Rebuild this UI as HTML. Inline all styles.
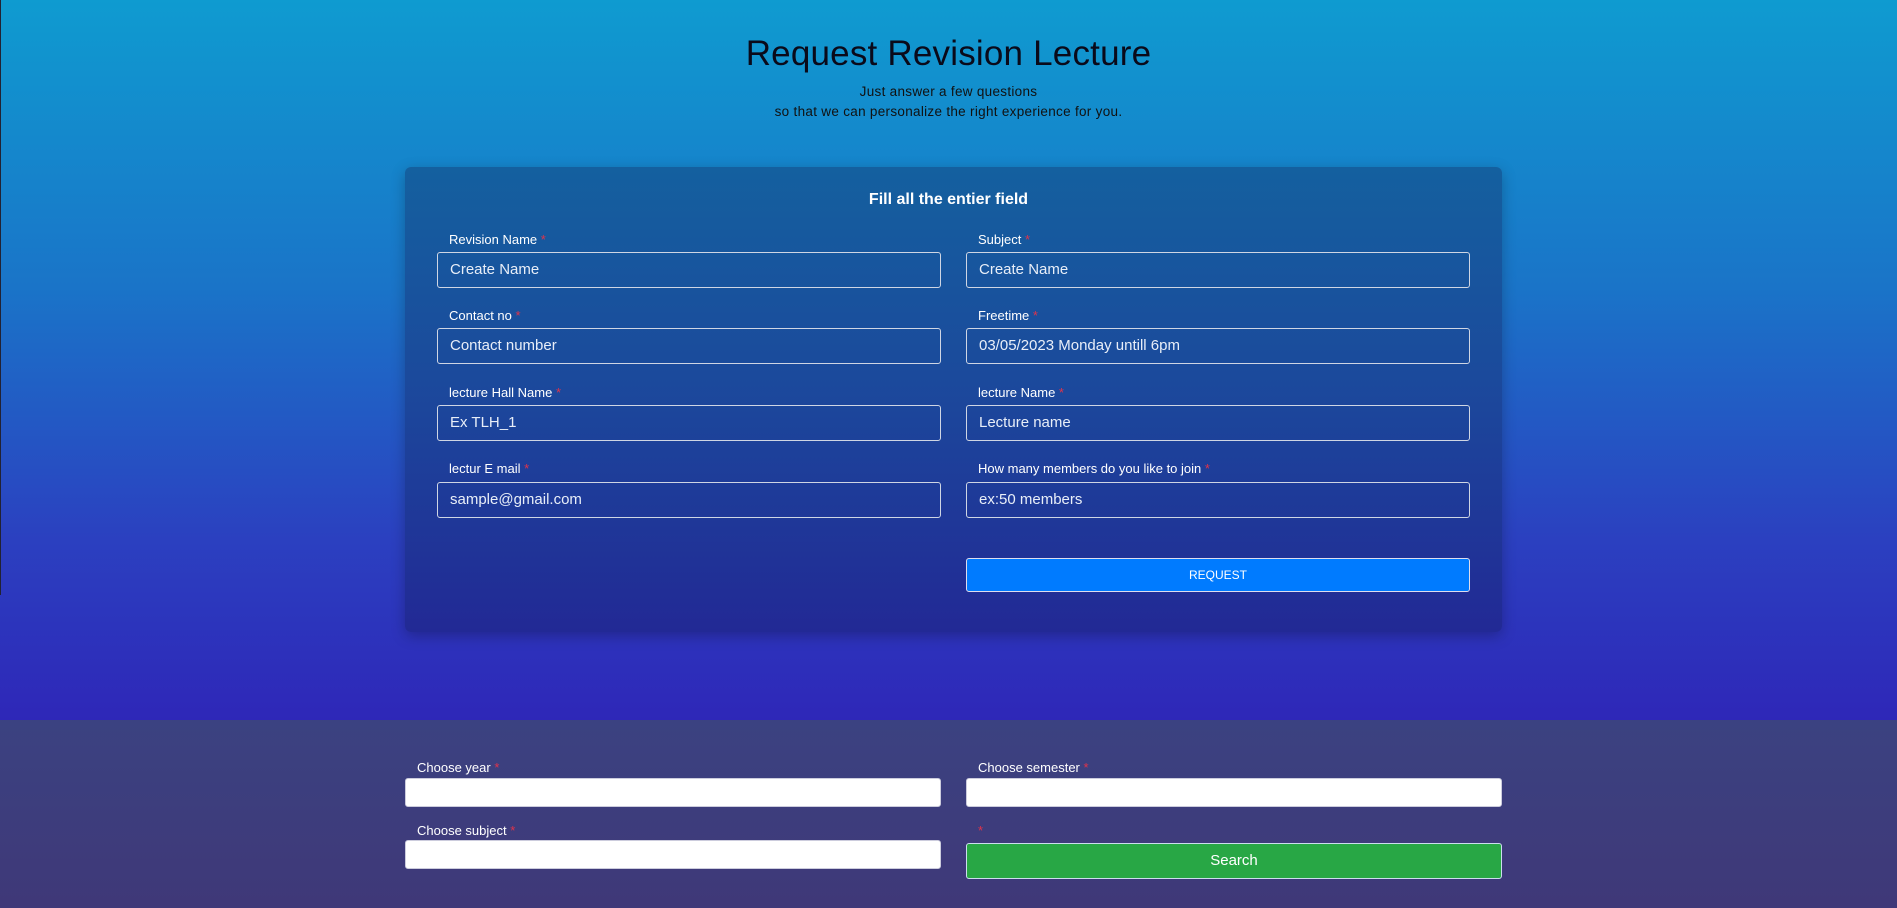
<!DOCTYPE html>
<html><head><style>
*{box-sizing:border-box;margin:0;padding:0}
body{width:1897px;height:908px;overflow:hidden;font-family:"Liberation Sans",sans-serif;position:relative}
.top{position:absolute;left:0;top:0;width:1897px;height:720px;background:linear-gradient(#0f9bd0,#1a74c8 40%,#2b40c0 75%,#2e27b8)}
.bot{position:absolute;left:0;top:720px;width:1897px;height:188px;background:linear-gradient(#3b4281,#3f3878)}
.edge{position:absolute;left:0;top:0;width:1px;height:595px;background:#223}
h1{position:absolute;top:34px;width:100%;text-align:center;font-size:35px;font-weight:400;color:#0a0a1a;letter-spacing:0.2px}
.sub{position:absolute;top:82px;width:100%;text-align:center;font-size:13.5px;line-height:20px;color:#111;letter-spacing:0.3px}
.card{position:absolute;left:405px;top:167px;width:1097px;height:465px;border-radius:6px;background:linear-gradient(#14609f,#1b4a9c 45%,#222995);box-shadow:0 4px 14px rgba(0,0,0,.25)}
.ch{position:absolute;top:191px;width:100%;text-align:center;color:#fff;font-size:16px;font-weight:bold}
.l{position:absolute;color:#fff;font-size:13px;margin-top:1px}
.l b{color:#e0334a;font-weight:normal}
.i{position:absolute;height:36px;border:1px solid #cfd6e4;border-radius:3px;color:#e8eef8;font-size:15px;padding-left:12px;line-height:34px}
.btn{position:absolute;left:966px;top:558px;width:504px;height:34px;background:#007bff;border:1px solid #dde;border-radius:3px;color:#fff;font-size:12px;text-align:center;line-height:32px}
.w{position:absolute;height:29px;background:#fff;border:1px solid #ccd;border-radius:3px}
.s{position:absolute;left:966px;top:843px;width:536px;height:36px;background:#28a745;border:1px solid #cde;border-radius:3px;color:#fff;font-size:15px;text-align:center;line-height:34px}
</style></head><body>
<div class="top"></div><div class="bot"></div><div class="edge"></div>
<h1>Request Revision Lecture</h1>
<div class="sub">Just answer a few questions<br>so that we can personalize the right experience for you.</div>
<div class="card"></div>
<div class="ch">Fill all the entier field</div>
<div class="l" style="left:449px;top:231px">Revision Name <b>*</b></div>
<div class="i" style="left:437px;top:252px;width:504px">Create Name</div>
<div class="l" style="left:978px;top:231px">Subject <b>*</b></div>
<div class="i" style="left:966px;top:252px;width:504px">Create Name</div>
<div class="l" style="left:449px;top:307px">Contact no <b>*</b></div>
<div class="i" style="left:437px;top:328px;width:504px">Contact number</div>
<div class="l" style="left:978px;top:307px">Freetime <b>*</b></div>
<div class="i" style="left:966px;top:328px;width:504px">03/05/2023 Monday untill 6pm</div>
<div class="l" style="left:449px;top:384px">lecture Hall Name <b>*</b></div>
<div class="i" style="left:437px;top:405px;width:504px">Ex TLH_1</div>
<div class="l" style="left:978px;top:384px">lecture Name <b>*</b></div>
<div class="i" style="left:966px;top:405px;width:504px">Lecture name</div>
<div class="l" style="left:449px;top:460px">lectur E mail <b>*</b></div>
<div class="i" style="left:437px;top:482px;width:504px">sample@gmail.com</div>
<div class="l" style="left:978px;top:460px">How many members do you like to join <b>*</b></div>
<div class="i" style="left:966px;top:482px;width:504px">ex:50 members</div>
<div class="btn">REQUEST</div>
<div class="l" style="left:417px;top:759px">Choose year <b>*</b></div>
<div class="w" style="left:405px;top:778px;width:536px"></div>
<div class="l" style="left:978px;top:759px">Choose semester <b>*</b></div>
<div class="w" style="left:966px;top:778px;width:536px"></div>
<div class="l" style="left:417px;top:822px">Choose subject <b>*</b></div>
<div class="w" style="left:405px;top:840px;width:536px"></div>
<div class="l" style="left:978px;top:822px"><b>*</b></div>
<div class="s">Search</div>
</body></html>
